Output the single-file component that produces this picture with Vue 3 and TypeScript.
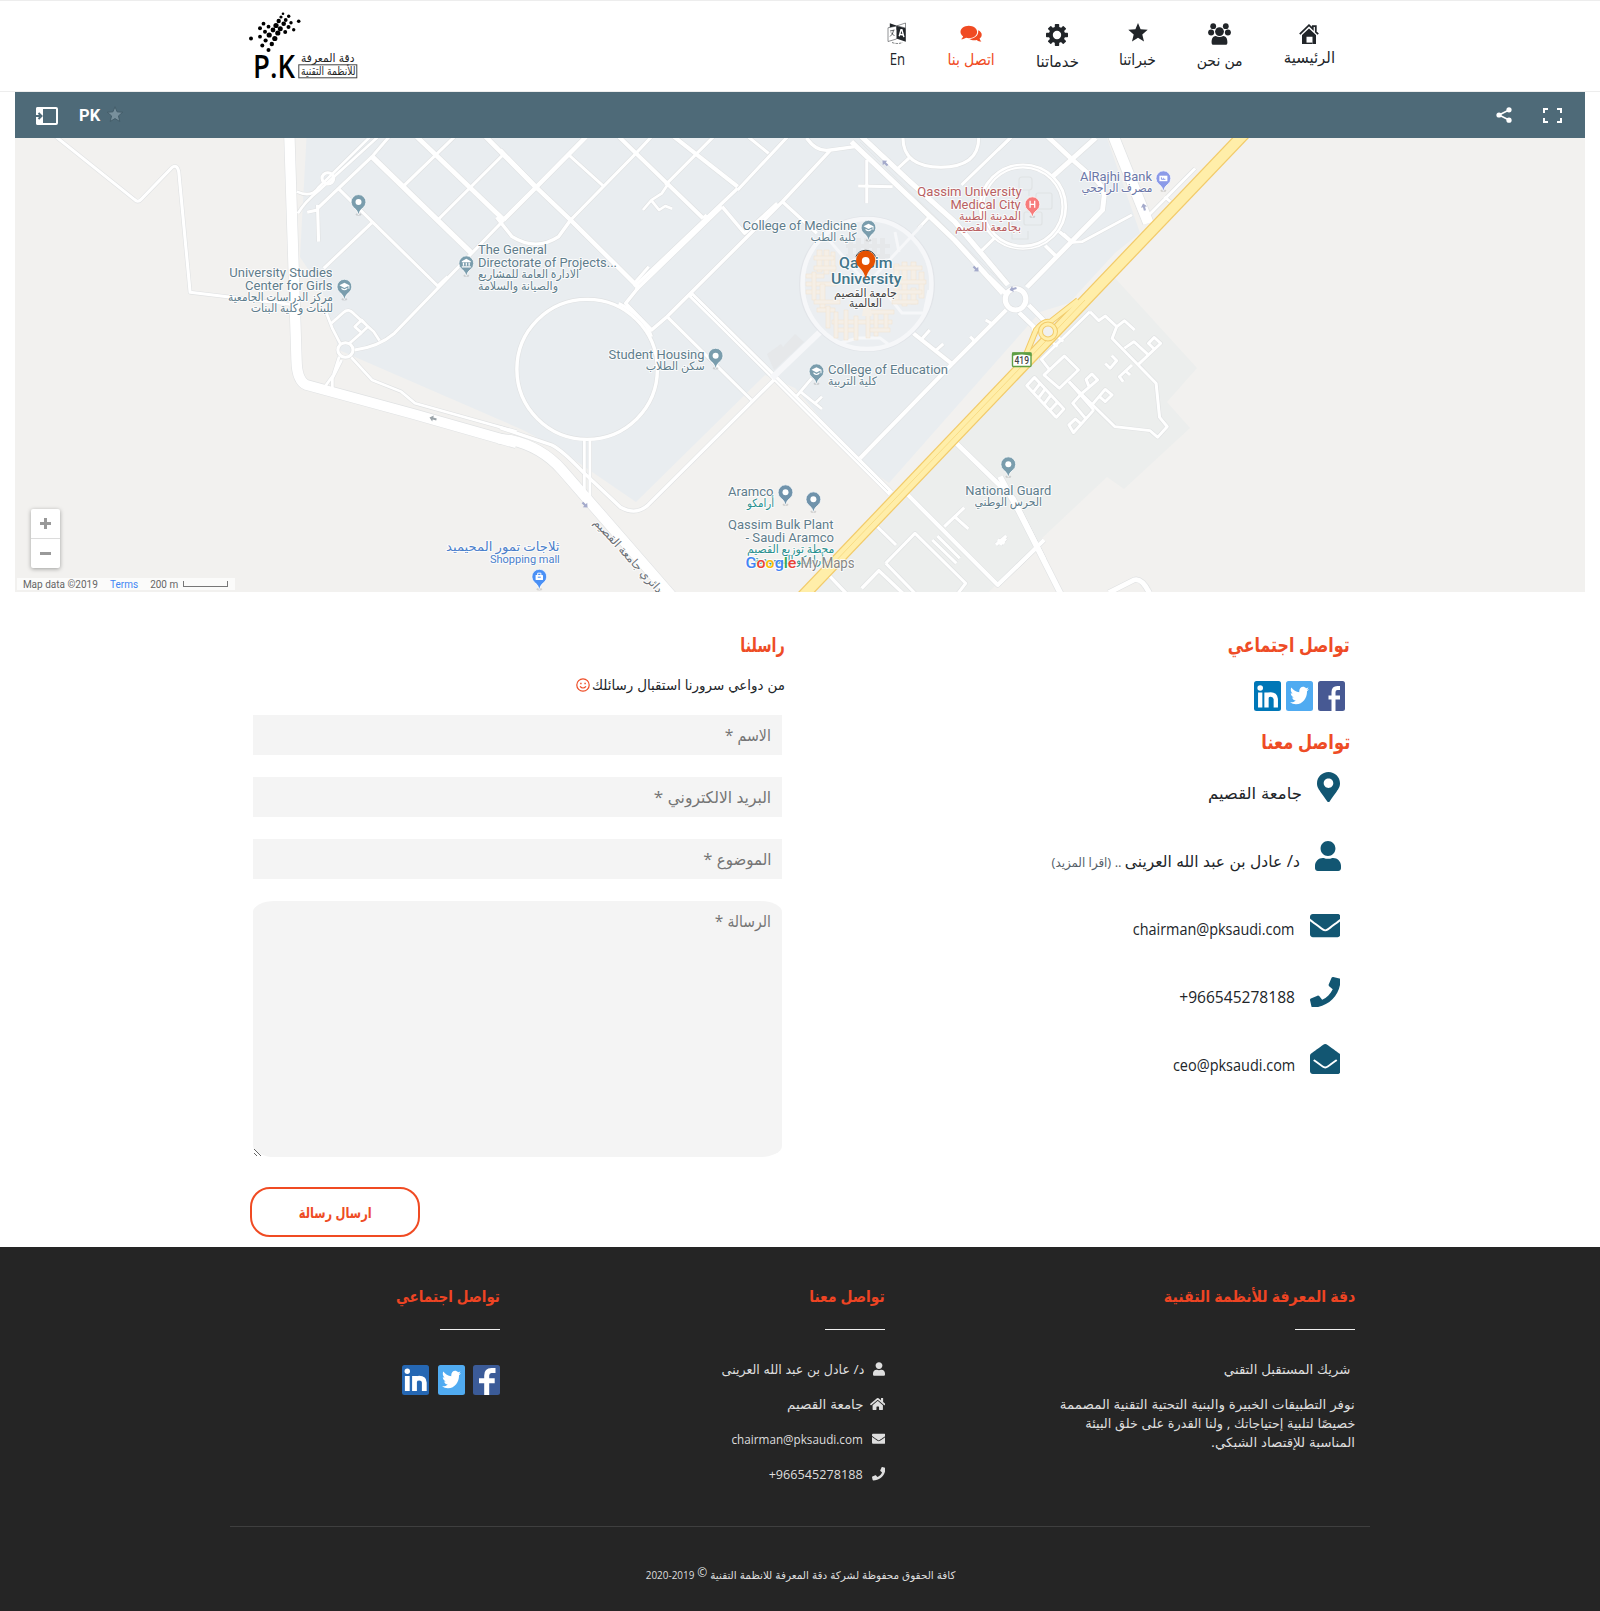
<script setup lang="ts">
type Label = [text: string, x: number, y: number, width: number, size: number, color: string, weight?: number]
type Road = [d: string, width: number]

// Squeezes or widens a line of text to a fixed measure, anchored at its right edge.
const vFit = {
  mounted(el: HTMLElement, { value }: { value: number }) {
    const natural = el.getBoundingClientRect().width
    el.style.transformOrigin = 'right center'
    el.style.transform = `scaleX(${value / natural})`
    el.style.marginLeft = `${value - natural}px`
  },
}

const paths = {
  pin: { w: 384, h: 512, d: 'M172.268 501.67C26.97 291.031 0 269.413 0 192 0 85.961 85.961 0 192 0s192 85.961 192 192c0 77.413-26.97 99.031-172.268 309.67-9.535 13.774-29.93 13.773-39.464 0zM192 272c44.183 0 80-35.817 80-80s-35.817-80-80-80-80 35.817-80 80 35.817 80 80 80z' },
  user: { w: 448, h: 512, d: 'M224 256c70.7 0 128-57.3 128-128S294.7 0 224 0 96 57.3 96 128s57.3 128 128 128zm89.6 32h-16.7c-22.2 10.2-46.9 16-72.9 16s-50.6-5.8-72.9-16h-16.7C60.2 288 0 348.2 0 422.4V464c0 26.5 21.5 48 48 48h352c26.5 0 48-21.5 48-48v-41.6c0-74.2-60.2-134.4-134.4-134.4z' },
  mail: { w: 512, h: 512, d: 'M502.3 190.8c3.9-3.1 9.7-.2 9.7 4.7V400c0 26.5-21.5 48-48 48H48c-26.5 0-48-21.5-48-48V195.6c0-5 5.7-7.8 9.7-4.7 22.4 17.4 52.1 39.5 154.1 113.6 21.1 15.4 56.7 47.8 92.2 47.6 35.7.3 72-32.8 92.3-47.6 102-74.1 131.6-96.3 154-113.7zM256 320c23.2.4 56.6-29.2 73.4-41.4 132.7-96.3 142.8-104.7 173.4-128.7 5.8-4.5 9.2-11.5 9.2-18.9v-19c0-26.5-21.5-48-48-48H48c-26.5 0-48 21.5-48 48v19c0 7.4 3.4 14.3 9.2 18.9 30.6 23.9 40.7 32.4 173.4 128.7 16.8 12.2 50.2 41.8 73.4 41.4z' },
  phone: { w: 512, h: 512, d: 'M493.4 24.6l-104-24c-11.3-2.6-22.9 3.3-27.5 13.9l-48 112c-4.2 9.8-1.4 21.3 6.9 28l60.6 49.6c-36 76.7-98.9 140.5-177.2 177.2l-49.6-60.6c-6.8-8.3-18.2-11.1-28-6.9l-112 48C3.9 366.5-2 378.1.6 389.4l24 104C27.1 504.2 36.7 512 48 512c256.1 0 464-207.5 464-464 0-11.2-7.7-20.9-18.6-23.4z' },
  open: { w: 512, h: 512, d: 'M512 464c0 26.51-21.49 48-48 48H48c-26.51 0-48-21.49-48-48V200.724a48 48 0 0 1 18.387-37.776c24.913-19.529 45.501-35.365 164.2-121.511C199.412 29.17 232.797-.347 256 .003c23.198-.354 56.596 29.172 73.413 41.433 118.687 86.137 139.303 101.995 164.2 121.512A48 48 0 0 1 512 200.724V464zm-65.666-196.605c-2.563-3.728-7.7-4.595-11.339-1.907-22.845 16.873-55.462 40.705-105.582 77.079-16.825 12.266-50.21 41.781-73.413 41.43-23.211.344-56.559-29.143-73.413-41.43-50.114-36.37-82.734-60.204-105.582-77.079-3.639-2.688-8.776-1.821-11.339 1.907l-9.072 13.196a7.998 7.998 0 0 0 1.839 10.967c22.887 16.899 55.454 40.69 105.303 76.868 20.274 14.781 56.524 47.813 92.264 47.573 35.724.242 71.961-32.771 92.263-47.573 49.85-36.179 82.418-59.97 105.303-76.868a7.998 7.998 0 0 0 1.839-10.967l-9.071-13.196z' },
  home: { w: 576, h: 512, d: 'M280.37 148.26L96 300.11V464a16 16 0 0 0 16 16l112.06-.29a16 16 0 0 0 15.92-16V368a16 16 0 0 1 16-16h64a16 16 0 0 1 16 16v95.64a16 16 0 0 0 16 16.05L464 480a16 16 0 0 0 16-16V300L295.67 148.26a12.19 12.19 0 0 0-15.3 0zM571.6 251.47L488 182.56V44.05a12 12 0 0 0-12-12h-56a12 12 0 0 0-12 12v72.61L318.47 43a48 48 0 0 0-61 0L4.34 251.47a12 12 0 0 0-1.6 16.9l25.5 31A12 12 0 0 0 45.15 301l235.22-193.74a12.19 12.19 0 0 1 15.3 0L530.9 301a12 12 0 0 0 16.9-1.6l25.5-31a12 12 0 0 0-1.7-16.93z' },
}
const bird = 'M459.37 151.716c.325 4.548.325 9.097.325 13.645 0 138.72-105.583 298.558-298.558 298.558-59.452 0-114.68-17.219-161.137-47.106 8.447.974 16.568 1.299 25.34 1.299 49.055 0 94.213-16.568 130.274-44.832-46.132-.975-84.792-31.188-98.112-72.772 6.498.974 12.995 1.624 19.818 1.624 9.421 0 18.843-1.3 27.614-3.573-48.081-9.747-84.143-51.98-84.143-102.985v-1.299c13.969 7.797 30.214 12.67 47.431 13.319-28.264-18.843-46.781-51.005-46.781-87.391 0-19.492 5.197-37.36 14.294-52.954 51.655 63.675 129.3 105.258 216.365 109.807-1.624-7.797-2.599-15.918-2.599-24.04 0-57.828 46.782-104.934 104.934-104.934 30.213 0 57.502 12.67 76.67 33.137 23.715-4.548 46.456-13.32 66.599-25.34-7.798 24.366-24.366 44.833-46.132 57.827 21.117-2.273 41.584-8.122 60.426-16.243-14.292 20.791-32.161 39.308-52.628 54.253z'

const nav = [
  { id: 'home', text: 'الرئيسية', w: 51.4, box: 25 },
  { id: 'team', text: 'من نحن', w: 46, box: 28 },
  { id: 'star', text: 'خبراتنا', w: 36.7, box: 26.5 },
  { id: 'gear', text: 'خدماتنا', w: 43, box: 28.5 },
  { id: 'chat', text: 'اتصل بنا', w: 47.4, box: 26.5 },
  { id: 'lang', text: 'En', w: 15.4, box: 26.5 },
]

const logoDots = [
  [283, 13.7, 1.3], [281, 17, 1.6], [288.7, 16.3, 1.7], [298.7, 21.3, 1.8], [278.7, 21, 2.2], [285.7, 20, 1.9], [291, 22.7, 1.7],
  [263.5, 23.7, 1.9], [276, 25.5, 2.6], [283.7, 23.8, 2.3], [268.5, 26.7, 1.9], [260, 28.3, 2], [288.5, 27, 2], [273, 30, 2.4],
  [280.3, 28.7, 2.5], [293.7, 29.7, 1.7], [265, 31.7, 2], [285.2, 32, 2], [277.8, 33, 2.6], [269.2, 35, 2.6], [260, 36.7, 1.9],
  [251, 38.4, 2], [274.8, 38.5, 2.6], [265.6, 40.5, 2.1], [271.8, 44, 2.2], [262.3, 45.5, 2], [268.5, 50, 2],
]

// Road network, one sheet per survey tile. Each sheet carries its own scale.
const tiles: { transform: string; roads: Road[] }[] = [
  {
    transform: 'translate(0 130) scale(.3444 .3333)',
    roads: [
      ['M150 10L390 208Q400 220 410 208L498 114Q514 100 519 125L552 487L860 525', 9],
      ['M862 185Q905 205 925 172L1075 20', 8], ['M865 250Q885 215 925 182L1100 18', 8],
      ['M935 145A17 17 0 1 0 969 145A17 17 0 1 0 935 145', 9],
      ['M892 247L922 240M922 225L925 335M922 235L1080 80L1130 20M985 178L1271 468L1300 440M1080 278L940 415', 9],
      ['M1080 80L1370 370', 16], ['M1170 170L1320 20M1271 270L1460 75', 9],
      ['M1210 20L1463 270', 14], ['M1410 20L1556 172', 14], ['M1463 270L1145 610Q1100 650 1030 660', 9],
      ['M981 660A22 22 0 1 0 1025 660A22 22 0 1 0 981 660', 9],
      ['M962 580L998 547Q1012 533 1028 552L1085 605L1102 632M1050 570L1068 590L1050 608L1030 590ZM1050 608L1015 640', 8],
      ['M948 550L965 595L990 645M985 680L968 735L940 775M992 690L965 745L965 780', 8],
      ['M1020 682L1080 750L1165 785L1205 820L1500 905', 8],
      ['M840 10L861 690Q862 752 890 765L1200 852L1500 940', 30],
    ],
  },
  {
    transform: 'translate(500 130) scale(.3444 .3333)',
    roads: [
      ['M0 60L105 172M105 172L250 20M105 172L10 270M105 172L205 270L400 470', 13],
      ['M-10 262L35 320Q105 365 170 320L205 270', 10],
      ['M200 75L300 168M205 270L390 75L440 20M480 165L620 20M690 180L835 20M720 20L780 70', 9],
      ['M345 20L590 265M505 20L690 170', 12], ['M486 165L470 190L440 210L415 240M440 212L462 240L480 228L500 236', 8],
      ['M690 175L390 470M645 230L395 480M645 230L710 310L805 220M590 265L600 255', 10],
      ['M820 215L485 560L440 600L365 520L400 475M820 215L920 310M960 60L820 215M890 24Q920 68 960 60L1030 50', 10],
      ['M432 410L390 460M485 560L730 810', 9],
      ['M49 718A204 210 0 1 0 457 718A204 210 0 1 0 49 718', 10], ['M345 520Q420 560 440 620', 9],
      ['M795 750L430 1125Q395 1158 350 1132L240 1025Q180 960 150 945L0 893', 10],
      ['M245 925L245 1110M261 925L261 1110', 8],
      ['M550 490L795 740L1135 1090', 18], ['M860 800L905 745M872 785L935 837M935 800L915 820', 8],
      ['M1215 295L1245 262M1390 370L1435 325M1065 90L1065 220M1040 168L1140 170M1480 25L1340 165', 9],
      ['M1020 35L1320 330L1460 490', 15], ['M1050 20L1190 155L1320 275L1475 465', 15],
      ['M1170 24Q1170 110 1280 112Q1390 110 1390 24M1192 80L1150 120', 9],
      ['M1467 508A30 32 0 1 0 1527 508A30 32 0 1 0 1467 508', 15],
      ['M1470 540L1310 705L1045 985', 12], ['M1200 610L1310 700', 12], ['M1222 630L1248 600M1265 662L1287 642M1410 570L1430 582M1365 620L1380 635', 9],
      ['M1315 930L1490 1105L1580 1290', 14], ['M1170 1080L1445 1365L1580 1230', 12],
      ['M1085 1180L1150 1245M1290 1190L1348 1133M1320 1160L1360 1197M1120 1300L1205 1210L1352 1360L1330 1390M1120 1300L1205 1390M1255 1230L1325 1300M1270 1218L1335 1285M1440 1245L1470 1218M1445 1230L1465 1240', 9],
      ['M945 1325L1005 1390M1050 1375L1100 1322L1170 1390', 10],
      ['M-5 926L30 930Q120 950 180 1020L260 1115L500 1400', 30],
    ],
  },
  {
    transform: 'translate(1000 90) scale(.38265 .3333)',
    roads: [
      ['M297 140L388 400', 28], ['M125 140L188 208L240 260Q275 290 272 320L268 360L70 592', 13], ['M250 144L135 262', 14],
      ['M165 430L190 457L215 455L345 375M510 235L385 380M430 320L445 335', 8], ['M118 467L145 497M155 425L188 457', 10],
      ['M-30 560L15 610M75 645L122 700M50 668L88 710L90 745', 12],
      ['M-48 350A108 122 0 1 0 168 350A108 122 0 1 0 -48 350', 15],
      ['M-5 180L32 140', 7],
      ['M235 665L108 808L130 840M135 755L150 770M150 740L165 755', 8],
      ['M115 855L168 798L205 840L155 895ZM180 875L300 1010L392 1022L412 1042L437 1010L417 982L408 880L293 745L305 710M235 665L258 692L275 678L305 710L325 692L352 720', 8],
      ['M325 775L350 755L388 795M360 825L420 760L403 742L388 760L404 778M275 820L288 835L305 812L292 797M345 825L312 860L322 875M330 845L340 855', 8],
      ['M90 862L167 957L147 982L70 887ZM105 880L88 905M118 897L100 925M133 915L115 943M150 937L130 962', 8],
      ['M212 912L190 940L225 987M245 960L192 1028L180 1005L197 987L212 1002M212 912L255 870L240 852L225 868L232 888M180 875L245 960M240 945L275 898L293 915L275 935L258 918', 8],
      ['M95 1375L-5 1485M0 1365L15 1345', 9], ['M285 1508L350 1470Q370 1462 390 1508', 14], ['M0 1160L50 1265L158 1510', 15],
    ],
  },
]

const slate = '#5f7d8c'
const labels: Label[] = [
  ['University Studies', 229.3, 277, 103.3, 13, slate], ['Center for Girls', 245, 290, 87.5, 13, slate],
  ['مركز الدراسات الجامعية', 228, 300.5, 105, 11.5, slate], ['للبنات وكلية البنات', 250.7, 311.8, 82.5, 11.5, slate],
  ['The General', 478, 254, 69, 13, slate], ['Directorate of Projects...', 478, 267, 139, 13, slate],
  ['الادارة العامة للمشاريع', 478, 278, 101, 11.5, slate], ['والصيانة والسلامة', 478, 289.6, 80, 11.5, slate],
  ['College of Medicine', 742.5, 229.7, 114.5, 13, slate], ['كلية الطب', 810.6, 241, 46, 11.5, slate],
  ['Qassim', 839, 267.7, 53.5, 15.5, '#42758a', 500], ['University', 831, 283.7, 70.5, 15.5, '#42758a', 500],
  ['جامعة القصيم', 834, 296.5, 63, 11.5, '#444'], ['العالمية', 849, 307.3, 33, 11.5, '#444'],
  ['Student Housing', 608.5, 358.8, 96, 13, slate], ['سكن الطلاب', 645.7, 370, 59, 11.5, slate],
  ['College of Education', 828, 373.7, 120, 13, slate], ['كلية التربية', 828, 384.8, 49, 11.5, slate],
  ['Aramco', 728, 496, 45.5, 13, slate], ['أرامكو', 747, 507, 27, 11.5, '#27908f'],
  ['Qassim Bulk Plant', 728, 528.8, 105.5, 13, slate], ['- Saudi Aramco', 745.5, 541.8, 88.5, 13, slate],
  ['محطة توزيع القصيم', 747, 553, 87.4, 11.5, '#27908f'], ['أرامكو السعودية', 754, 564, 70, 11.5, '#27908f'],
  ['National Guard', 965.2, 494.7, 86, 13, slate], ['الحرس الوطني', 974.5, 506, 67.5, 11.5, slate],
  ['ثلاجات تمور المحيميد', 446, 551, 113.5, 12.5, '#4b80cb'], ['Shopping mall', 490, 563, 69.8, 11, '#4b80cb'],
  ['AlRajhi Bank', 1080, 180.7, 72, 13, '#6b77a8'], ['مصرف الراجحي', 1081.5, 192, 71, 11.5, '#6b77a8'],
  ['Qassim University', 917.3, 196, 104.3, 13, '#b95f62'], ['Medical City', 950.4, 209, 70.3, 13, '#b95f62'],
  ['المدينة الطبية', 959, 220, 62, 11.5, '#b95f62'], ['بجامعة القصيم', 955, 231, 66, 11.5, '#b95f62'],
]

const markers: [number, number, string, string][] = [
  [358.5, 202, '#7a9dad', 'dot'], [344.4, 286.7, '#7a9dad', 'cap'], [466.3, 263.3, '#7a9dad', 'hall'], [868.5, 227.7, '#7a9dad', 'cap'],
  [715.6, 355.7, '#7a9dad', 'dot'], [816.5, 371.3, '#7a9dad', 'cap'], [785.5, 492.3, '#7093ab', 'dot'], [813.4, 499.3, '#7093ab', 'dot'],
  [1008.3, 464.3, '#7a9dad', 'dot'], [1032.4, 204.3, '#f77c7c', 'h'], [1163.4, 178.3, '#8b9ae8', 'bank'], [539.3, 576.7, '#4a90f5', 'bag'],
]
const pinShape = 'M0 13Q-1 8-4.8 5.6A7.4 7.4 0 1 1 4.8 5.6Q1 8 0 13Z'

// Campus buildings inside the ring road: x, y, width, height of each block.
const blocks = [
  [817, 250, 5, 22], [824, 250, 5, 24], [831, 252, 4, 20], [814, 256, 20, 4], [814, 266, 22, 4], [806, 274, 18, 4], [806, 282, 30, 4], [806, 290, 18, 4],
  [812, 272, 4, 28], [820, 284, 5, 24], [814, 300, 26, 4], [817, 308, 18, 4], [826, 306, 4, 22], [832, 320, 60, 4], [835, 328, 22, 4],
  [834, 312, 4, 26], [844, 310, 4, 30], [854, 316, 4, 24], [866, 310, 4, 28], [874, 312, 4, 24], [884, 312, 4, 18], [870, 328, 20, 4], [868, 310, 26, 4],
  [894, 264, 5, 36], [902, 262, 5, 44], [911, 262, 5, 18], [911, 288, 5, 16], [919, 272, 5, 26], [894, 266, 28, 4], [890, 280, 36, 4], [894, 290, 28, 4], [892, 300, 26, 4],
]

const contacts = [
  { icon: paths.pin, w: 23, h: 30, top: 7, end: 0, text: 'جامعة القصيم', fit: 94 },
  { icon: paths.user, w: 26, h: 30, top: 7.5, end: -1, text: 'د/ عادل بن عبد الله العرينى', fit: 175, more: true },
  { icon: paths.mail, w: 30.5, h: 31, top: 8.5, end: 0, text: 'chairman@pksaudi.com', fit: 161.7 },
  { icon: paths.phone, w: 30.5, h: 30.5, top: 7.5, end: 0, text: '+966545278188', fit: 115.7 },
  { icon: paths.open, w: 30.5, h: 30, top: 7, end: 0, text: 'ceo@pksaudi.com', fit: 122.4 },
]
const fields = [
  { text: 'الاسم *', fit: 46 },
  { text: 'البريد الالكتروني *', fit: 117.4 },
  { text: 'الموضوع *', fit: 68 },
]
const footerContacts = [
  { icon: paths.user, w: 12, h: 14, gap: 9, text: 'د/ عادل بن عبد الله العرينى', fit: 142.7 },
  { icon: paths.home, w: 15.5, h: 14, gap: 5.5, text: 'جامعة القصيم', fit: 76.6 },
  { icon: paths.mail, w: 13.5, h: 13.5, gap: 8.5, text: 'chairman@pksaudi.com', fit: 131.3 },
  { icon: paths.phone, w: 13.5, h: 13.5, gap: 8.5, text: '+966545278188', fit: 94 },
]
const about = [
  { text: 'نوفر التطبيقات الخبيرة والبنية التحتية التقنية المصممة', fit: 295 },
  { text: 'خصيصًا لتلبية إحتياجاتك , ولنا القدرة على خلق البيئة', fit: 270 },
  { text: 'المناسبة للإقتصاد الشبكي.', fit: 144 },
]
const isLatin = (s: string) => /^[+\w]/.test(s) && !/[\u0600-\u06ff]/.test(s)
</script>

<template>
  <div class="page" dir="rtl">
    <header class="top">
      <nav class="menu">
        <a v-for="n in nav" :key="n.id" :class="['item', { active: n.id === 'chat' }]">
          <span class="glyph" :style="{ height: n.box + 'px' }">
            <svg v-if="n.id === 'home'" class="low" width="20" height="21" viewBox="0 0 20 21">
              <path d="M.8 11.2L10 2.2l3.8 3.7V3.2h3v5.7l2.4 2.3" fill="none" stroke="currentColor" stroke-width="1.8" />
              <path d="M10 5.4l7 6.7V21h-3.5v-7.3h-6V21H3v-8.9z" fill="currentColor" />
              <path d="M6.5 20.3h7" stroke="currentColor" stroke-width="1.4" />
            </svg>
            <svg v-else-if="n.id === 'team'" width="23" height="23" viewBox="0 0 23 23" fill="currentColor">
              <circle cx="5.2" cy="4.2" r="2.9" /><circle cx="17.8" cy="4.2" r="2.9" />
              <circle cx="3.1" cy="10.6" r="3" /><circle cx="19.9" cy="10.6" r="3" />
              <circle cx="11.5" cy="9.6" r="4.4" />
              <path d="M3.6 20.5c0-4.6 1.5-6.4 4.2-6.6 2.2 1.5 5.2 1.5 7.4 0 2.7.2 4.2 2 4.2 6.6 0 1.4-.6 2.3-1.9 2.3h-12c-1.3 0-1.9-.9-1.9-2.3z" />
            </svg>
            <svg v-else-if="n.id === 'star'" width="20" height="20" viewBox="0 0 20 20"><path d="M10 1l2.6 6.3 7.1.5-5.4 4.6 1.7 7L10 15.7 4 19.4l1.7-7L.3 7.800l7.1-.5z" fill="currentColor" /></svg>
            <svg v-else-if="n.id === 'gear'" width="22" height="24" viewBox="-11 -13 22 24">
              <rect v-for="a in 8" :key="a" x="-2.2" y="-11" width="4.4" height="6" rx=".7" fill="currentColor" :transform="`rotate(${a * 45})`" />
              <circle r="6.2" fill="none" stroke="currentColor" stroke-width="4" />
            </svg>
            <svg v-else-if="n.id === 'chat'" width="22" height="21" viewBox="0 0 22 21" fill="currentColor">
              <path d="M8.8 3.7c4.7 0 8.3 2.8 8.3 6.3s-3.6 6.2-8.3 6.2c-1 0-1.9-.1-2.7-.4-1.3.9-3 1.5-5 1.5 1-.8 1.7-1.8 2-3C1.5 13.2.5 11.7.5 10c0-3.5 3.6-6.3 8.3-6.3z" />
              <path d="M18.2 8.3c2.2 1 3.5 2.6 3.5 4.4 0 1.6-.8 2.9-2.1 3.9.3 1.2.9 2.2 1.8 3-1.9 0-3.5-.5-4.7-1.5-3 .6-5.6 0-7.400-1.2 5-.1 9.6-3 8.9-8.6z" />
            </svg>
            <svg v-else width="20" height="23" viewBox="0 0 20 23">
              <path d="M2.8 1.2l7.2 2.6v4H2.8z" fill="currentColor" />
              <path d="M10 3.8l8.5-2.8v5L10 3.8M1 5.8L9.500 4v13L1 19.5z" fill="#fff" stroke="currentColor" stroke-width=".5" />
              <path d="M10 4l8.800 2.2v13.5L10 16.8z" fill="currentColor" />
              <path d="M3 9l4.5-1M6.5 8.500Q6 12.5 3 14.5M4 10.5L7.500 14" stroke="currentColor" fill="none" stroke-width=".7" />
              <path d="M12.200 14.2L14 7.800h.9l2 7.300M13 12.200l3.200.8" stroke="#fff" fill="none" stroke-width="1.400" />
              <path d="M5 20.500q5.500 2 10.500 0" stroke="currentColor" fill="none" stroke-width=".6" stroke-dasharray="2.500 1" />
            </svg>
          </span>
          <span v-fit="n.w" class="fit">{{ n.text }}</span>
        </a>
      </nav>
      <svg class="logo" width="110" height="72" viewBox="248 10 110 72" direction="ltr">
        <circle v-for="(d, i) in logoDots" :key="i" :cx="d[0]" :cy="d[1]" :r="d[2]" />
        <text x="253" y="77.7" class="mono" textLength="42" lengthAdjust="spacingAndGlyphs">P.K</text>
        <text x="301" y="62" class="tag" textLength="53.5" lengthAdjust="spacingAndGlyphs">دقة المعرفة</text>
        <rect x="298.8" y="64.8" width="58" height="13" fill="none" stroke="#444" />
        <text x="301" y="74.5" class="tag" textLength="54.5" lengthAdjust="spacingAndGlyphs">للأنظمة التقنية</text>
      </svg>
    </header>

    <section class="map" dir="ltr">
      <div class="bar">
        <svg width="22" height="18" viewBox="0 0 22 18"><rect x="1" y="1" width="20" height="16" rx="1" fill="none" stroke="#fff" stroke-width="2" /><path d="M0 2q0-2 2-2h5v18H2q-2 0-2-2z" fill="#fff" /><path d="M0 9h4M2.500 6l3 3-3 3" stroke="#4e6a78" stroke-width="2" fill="none" /></svg>
        <b class="name">PK</b>
        <svg width="16" height="16" viewBox="0 0 20 20"><path d="M10 1l2.6 6.3 7.1.5-5.4 4.6 1.7 7L10 15.7 4 19.4l1.7-7L.3 7.800l7.1-.5z" fill="#78909c" stroke="#435c69" stroke-width="1.2" /></svg>
        <svg class="share" width="16" height="16" viewBox="0 0 16 16"><path d="M13 3L3 8l10 5" fill="none" stroke="#fff" stroke-width="1.6" /><circle cx="13" cy="2.8" r="2.6" fill="#fff" /><circle cx="3" cy="8" r="2.6" fill="#fff" /><circle cx="13" cy="13.2" r="2.6" fill="#fff" /></svg>
        <svg width="19" height="15" viewBox="0 0 19 15"><path d="M1 5V1h4M14 1h4v4M18 10v4h-4M5 14H1v-4" fill="none" stroke="#fff" stroke-width="2" /></svg>
      </div>
      <svg class="canvas" width="1570" height="454" viewBox="15 138 1570 454">
        <path d="M306.5 138L300 257L322 290L339 350L355 357L523 430L560 450L636 502L765 375L795 388L858 462L889 483L1040 312L1069 303L1115 253L1140 233L1107 138Z" fill="#e9edf0" />
        <path d="M1115 278L1197 368L1167 402L1190 428L1124 489L1107 477L1040 540L989 592H808Z" fill="#eceeed" />
        <path d="M767 354l14-10 2 3 12-13 9 8-30 28z" fill="#e6e8ea" />
        <g fill="none" stroke-linejoin="round">
          <g v-for="(t, i) in tiles" :key="'c' + i" :transform="t.transform" stroke="#e0e2e3">
            <path v-for="(r, j) in t.roads" :key="j" :d="r[0]" :stroke-width="r[1] + 3.5" />
          </g>
          <g v-for="(t, i) in tiles" :key="'r' + i" :transform="t.transform" stroke="#fff">
            <path v-for="(r, j) in t.roads" :key="j" :d="r[0]" :stroke-width="r[1]" />
          </g>
          <path d="M982 207a41 41 0 1 1 82 0a41 41 0 1 1-82 0" stroke="#e4e6e7" stroke-width=".8" />
          <path d="M692 296L888 491M860 142L1005 286" stroke="#e3e5e7" stroke-width=".9" />
          <g stroke="#e0e3e4" stroke-width="1.2"><rect x="1019" y="177" width="13" height="13" rx="3" /><rect x="1036" y="193" width="16" height="16" rx="2" /><rect x="1024" y="212" width="18" height="13" rx="2" /><path d="M1012 222v17h16v-8M1018 190v12M1029 190v6" /></g>
          <path d="M772 378L820 332" stroke="#f6f7f9" stroke-width="6" />
          <ellipse cx="867" cy="284" rx="67" ry="67" fill="#ebeef1" stroke="#e2e5e9" stroke-width="2" />
          <ellipse cx="867" cy="284" rx="64.5" ry="65" stroke="#f6f7f9" stroke-width="4.5" />
          <path d="M822 232L867 284L922 225M895 232L899 252M885 292L902 313H924L929 290M840 343L858 338H880L888 344" stroke="#f6f7f9" stroke-width="3" />
        </g>
        <g fill="#f5efe7" stroke="#f1e2cf" stroke-width=".5"><rect v-for="(b, i) in blocks" :key="i" :x="b[0]" :y="b[1]" :width="b[2]" :height="b[3]" /></g>
        <g fill="#e6e8ea"><rect v-for="k in 5" :key="k" :x="840 + k * 8" y="238" width="5" height="24" /><rect x="846" y="244" width="44" height="4" /><rect x="846" y="254" width="44" height="4" /></g>
        <path d="M867 286L862 316H872Z" fill="#f5efe7" />

        <g fill="none">
          <path d="M800 599L1247 131" stroke="#f2cb6a" stroke-width="12.5" />
          <path d="M1023 362L1036 330Q1044 320 1050 322L1078 300" stroke="#f2cb6a" stroke-width="6" />
          <path d="M1023 362L1036 330Q1044 320 1050 322L1078 300" stroke="#ffeea9" stroke-width="4" />
          <path d="M800 599L1247 131" stroke="#ffeea9" stroke-width="10" />
          <path d="M830 567L1085 300" stroke="#f6d77c" stroke-width=".8" />
          <ellipse cx="1048" cy="331.5" rx="7.5" ry="7.5" stroke="#f2cb6a" stroke-width="5" fill="#f0f0ef" />
          <ellipse cx="1048" cy="331.5" rx="7.5" ry="7.5" stroke="#ffeea9" stroke-width="3" />
        </g>
        <g fill="#a4aacb">
          <path v-for="(a, i) in [[885, 163, 225], [976, 269, 45], [1013, 289, 165], [1144, 207, 255], [585, 505, 45]]" :key="i" d="M4 0L0-3.500V-1.200H-4V1.200H0V3.500Z" :transform="`translate(${a[0]} ${a[1]}) rotate(${a[2]}) scale(.9)`" />
          <path d="M4 0L0-3.500V-1.200H-4V1.200H0V3.500Z" transform="translate(433 418.5) rotate(195) scale(.9)" fill="#9aa3a8" />
        </g>

        <g v-for="(m, i) in markers" :key="'m' + i" :transform="`translate(${m[0]} ${m[1]})`">
          <ellipse cy="12.5" rx="3" ry="1.2" fill="#0002" />
          <path :d="pinShape" :fill="m[2]" stroke="#fff" stroke-width=".7" />
          <circle v-if="m[3] === 'dot'" r="3" fill="#fff" />
          <path v-else-if="m[3] === 'cap'" d="M-5-1.500L0-4L5-1.500V2H4V-.8L0 1.300ZM-3 1L0 2.600L3 1V2.400Q0 4.800-3 2.400Z" fill="#fff" />
          <path v-else-if="m[3] === 'hall'" d="M0-4.500L4.500-2V-1H-4.500V-2ZM-3.500-.5h1.300v3h-1.300zM-.6-.5H.6v3H-.6zM2.200-.5h1.300v3H2.200zM-4.500 3h9v1.200h-9z" fill="#fff" />
          <path v-else-if="m[3] === 'h'" d="M-2.300-3.500V3.500M2.300-3.500V3.500M-2.300 0H2.300" stroke="#fff" stroke-width="1.3" />
          <g v-else-if="m[3] === 'bank'"><rect x="-4" y="-2.6" width="8" height="5.500" fill="#fff" /><path d="M-2-1v2h4M0-.5v1" stroke="#8b9ae8" fill="none" /></g>
          <g v-else><rect x="-3.7" y="-1.7" width="7.4" height="5" rx=".6" fill="#fff" /><path d="M-1.600-1.500V-3.500H1.600V-1.500" stroke="#fff" fill="none" /><path d="M-1.500 .5H1.500" stroke="#4a90f5" /></g>
        </g>
        <g><rect x="1012.5" y="353" width="18.5" height="13.5" rx="1" fill="#fff" stroke="#5f9e44" stroke-width="1.4" /><path d="M1012 352.500h19.500v3.500q-5-1.500-9.700-1.500t-9.800 1.500z" fill="#5f9e44" /><text class="lbl" x="1014.5" y="363.7" font-size="10" fill="#444" font-weight="500" textLength="14.5" lengthAdjust="spacingAndGlyphs">419</text></g>
        <text v-for="(l, i) in labels" :key="'l' + i" class="lbl" :x="l[1]" :y="l[2]" :font-size="l[4]" :fill="l[5]" :font-weight="l[6] ?? 400" :textLength="l[3]" lengthAdjust="spacingAndGlyphs">{{ l[0] }}</text>
        <text class="lbl" transform="translate(593 523) rotate(47.5)" font-size="11.5" fill="#6a6f75" textLength="96" lengthAdjust="spacingAndGlyphs">دائري جامعة القصيم</text>
        <text class="lbl" x="745.5" y="568" font-size="15.5" font-weight="500" textLength="51" lengthAdjust="spacingAndGlyphs"><tspan fill="#4285f4">G</tspan><tspan fill="#ea4335">o</tspan><tspan fill="#fbbc05">o</tspan><tspan fill="#4285f4">g</tspan><tspan fill="#34a853">l</tspan><tspan fill="#ea4335">e</tspan></text>
        <text class="lbl" x="800.6" y="568" font-size="14" fill="#868686" textLength="54" lengthAdjust="spacingAndGlyphs">My Maps</text>
        <g>
          <path d="M865.7 279.5Q864.5 272 859.5 267.500A9.600 9.600 0 1 1 871.9 267.500Q867 272 865.7 279.5Z" fill="#e65100" />
          <path d="M855.900 256.500a10.800 10.800 0 0 1 19.600 0" fill="none" stroke="#333" stroke-width=".9" />
          <circle cx="865.7" cy="261" r="3.9" fill="#fff" />
        </g>
      </svg>
      <div class="zoom"><i class="plus"></i><i class="minus"></i></div>
      <div class="credit"><span v-fit="75" class="fit">Map data ©2019</span><a v-fit="28" class="fit">Terms</a><span v-fit="28" class="fit">200 m</span><i></i></div>
    </section>

    <main class="contact">
      <section class="info">
        <h3><span v-fit="122" class="fit">تواصل اجتماعي</span></h3>
        <div class="social">
          <svg width="27" height="30" viewBox="0 0 27 30"><rect width="27" height="30" rx="2.5" fill="#475993" /><path d="M15.500 30V11q0-4 4-4h2.500M10.500 16.500H22" fill="none" stroke="#fff" stroke-width="4" /></svg>
          <svg width="27" height="30" viewBox="0 0 27 30"><rect width="27" height="30" rx="2.5" fill="#50abf1" /><path :d="bird" fill="#fff" transform="translate(4 3.8) scale(.037 .042)" /></svg>
          <svg width="27" height="30" viewBox="0 0 27 30"><rect width="27" height="30" rx="2.5" fill="#0077b7" /><circle cx="6.2" cy="7" r="2.8" fill="#fff" /><path d="M6.200 11.500V26.500M12.500 26.500V11.500M12.500 26.500V17q0-3.500 4.300-3.500T21.800 18v8.500" fill="none" stroke="#fff" stroke-width="4.3" /></svg>
        </div>
        <h3 class="second"><span v-fit="89" class="fit">تواصل معنا</span></h3>
        <ul class="rows">
          <li v-for="c in contacts" :key="c.text">
            <svg :width="c.w" :height="c.h" :viewBox="`0 0 ${c.icon.w} ${c.icon.h}`" preserveAspectRatio="none" :style="{ marginTop: c.top + 'px', marginRight: c.end + 'px' }"><path :d="c.icon.d" fill="#125672" /></svg>
            <p><span v-fit="c.fit" :class="['fit', { latin: isLatin(c.text) }]" :dir="isLatin(c.text) ? 'ltr' : 'rtl'">{{ c.text }}</span><a v-if="c.more" v-fit="70" class="fit more">.. (اقرا المزيد)</a></p>
          </li>
        </ul>
      </section>

      <form class="letter" @submit.prevent>
        <h3><span v-fit="44.4" class="fit">راسلنا</span></h3>
        <p class="lead">
          <span v-fit="193" class="fit">من دواعي سرورنا استقبال رسائلك</span>
          <svg width="14" height="14" viewBox="0 0 14 14" fill="none" stroke="#ee4c26" stroke-width="1.2"><circle cx="7" cy="7" r="6.2" /><path d="M4 8.300q3 3.400 6 0" /><path d="M4.200 5.400h1.400M8.400 5.400h1.400" stroke-width="1.5" /></svg>
        </p>
        <label v-for="f in fields" :key="f.text" class="field"><input type="text" /><span v-fit="f.fit" class="fit hint">{{ f.text }}</span></label>
        <label class="field area"><textarea></textarea><span v-fit="56" class="fit hint">الرسالة *</span></label>
        <button type="submit"><span v-fit="73" class="fit">ارسال رسالة</span></button>
      </form>
    </main>

    <footer>
      <div class="cols">
        <section class="c1">
          <h4><span v-fit="191.6" class="fit">دقة المعرفة للأنظمة التقنية</span></h4>
          <p class="motto"><span v-fit="126.7" class="fit">شريك المستقبل التقني</span></p>
          <p v-for="a in about" :key="a.fit" class="line"><span v-fit="a.fit" class="fit">{{ a.text }}</span></p>
        </section>
        <section class="c2">
          <h4><span v-fit="75.3" class="fit">تواصل معنا</span></h4>
          <p v-for="c in footerContacts" :key="c.text" class="entry" :style="{ gap: c.gap + 'px' }">
            <svg :width="c.w" :height="c.h" :viewBox="`0 0 ${c.icon.w} ${c.icon.h}`"><path :d="c.icon.d" fill="#dedede" /></svg>
            <span v-fit="c.fit" class="fit" :dir="isLatin(c.text) ? 'ltr' : 'rtl'">{{ c.text }}</span>
          </p>
        </section>
        <section class="c3">
          <h4><span v-fit="104" class="fit">تواصل اجتماعي</span></h4>
          <div class="social">
            <svg width="27" height="30" viewBox="0 0 27 30"><rect width="27" height="30" rx="2.5" fill="#3b5b98" /><path d="M13.700 30V10.500q0-5 4.800-5h4M6 15.700h15.700" fill="none" stroke="#fff" stroke-width="5" /></svg>
            <svg width="27" height="30" viewBox="0 0 27 30"><rect width="27" height="30" rx="2.5" fill="#50abf1" /><path :d="bird" fill="#fff" transform="translate(4 3.8) scale(.037 .042)" /></svg>
            <svg width="27" height="30" viewBox="0 0 27 30"><rect width="27" height="30" rx="2.5" fill="#2567b3" /><circle cx="5.3" cy="6.3" r="2.7" fill="#fff" /><path d="M5.300 11V26M12.500 26V11M12.500 26V17q0-3.800 4.800-3.800T22.300 17.500V26" fill="none" stroke="#fff" stroke-width="4.8" /></svg>
          </div>
        </section>
      </div>
      <p class="rights"><span v-fit="245.3" class="fit">كافة الحقوق محفوظة لشركة دقة المعرفة للانظمة التقنية</span><span class="copy">©</span><span v-fit="48.7" class="fit" dir="ltr">2020-2019</span></p>
    </footer>
  </div>
</template>

<style>
body { margin: 0; background: #fff; }
</style>

<style scoped>
.page { width: 1600px; height: 1611px; overflow: hidden; display: flex; flex-direction: column; font-family: 'Open Sans', 'DejaVu Sans Condensed', 'DejaVu Sans', sans-serif; color: #212529; background: #fff; }
.page * { box-sizing: border-box; }
svg { display: block; flex: none; }
h3, h4, p, ul { margin: 0; padding: 0; list-style: none; }
.fit { display: inline-block; white-space: nowrap; }
.latin { font-weight: 400; }

.top { flex: none; height: 92px; border-top: 1px solid #ededed; border-bottom: 1px solid #ededed; display: flex; justify-content: space-between; padding: 0 265px 0 248px; }
.menu { display: flex; gap: 40.7px; padding-top: 21px; }
.item { display: flex; flex-direction: column; align-items: center; font-size: 15.5px; line-height: 20px; }
.glyph { display: block; }
.low { margin-top: 1px; }
.active { color: #f04b23; }
.logo { margin-top: 9px; overflow: visible; }
.mono { font: 600 33px 'Open Sans', sans-serif; }
.tag { font: 11.5px 'DejaVu Sans Condensed', 'DejaVu Sans', sans-serif; fill: #222; }

.map { flex: none; position: relative; width: 1570px; margin: 0 15px; height: 500px; background: #f2f1ef; font-family: Roboto, 'DejaVu Sans Condensed', sans-serif; overflow: hidden; }
.bar { height: 46px; background: #4e6a78; display: flex; align-items: center; padding: 0 23px 0 21px; }
.bar svg:first-child { margin-top: 2px; }
.bar svg:nth-child(3) { margin-bottom: 2px; }
.name { color: #fff; font-size: 16.5px; margin: 0 7px 0 21px; width: 21px; }
.share { margin-left: auto; margin-right: 31px; }
.lbl { font-family: Roboto, 'DejaVu Sans', sans-serif; paint-order: stroke; stroke: #fff; stroke-width: 2px; stroke-linejoin: round; stroke-opacity: .8; }
.zoom { position: absolute; left: 16px; top: 417px; width: 29px; height: 59px; background: #fff; border-radius: 2px; box-shadow: 0 1px 4px rgba(0, 0, 0, .35); display: flex; flex-direction: column; }
.zoom i { flex: 1; display: grid; place-items: center; }
.zoom i + i { border-top: 1px solid #dcdcdc; }
.zoom i::before, .plus::after { content: ''; grid-area: 1 / 1; width: 11px; height: 3px; background: #999; }
.plus::after { transform: rotate(90deg); }
.credit { position: absolute; left: 2px; bottom: 2px; width: 218px; height: 12px; background: rgba(255, 255, 255, .7); font-size: 10px; line-height: 13px; color: #666; display: flex; align-items: center; padding-left: 6px; }
.credit a { color: #4285f4; }
.credit .fit:nth-child(2) { translate: 12px 0; }
.credit .fit:nth-child(3) { translate: 24px 0; }
.credit i { width: 45px; height: 6px; border: 1px solid #777; border-top: 0; margin-left: 29px; }

.contact { flex: none; height: 655px; display: flex; justify-content: space-between; padding: 0 250px; }
h3 { font-size: 20px; line-height: 30px; font-weight: 700; color: #ee4c26; }
.info { padding-top: 37.5px; }
.social { display: flex; gap: 5px; }
.info .social { margin: 21.5px 5px 0 0; }
.second { margin-top: 16px; }
.rows { margin-top: 8px; padding-right: 10px; }
.rows li { height: 68px; display: flex; align-items: flex-start; gap: 14.7px; }
.rows p { font-size: 16px; line-height: 24px; padding-top: 15.5px; }
.more { font-size: 12.5px; color: #56606a; margin-right: 4px; }

.letter { width: 535px; padding-top: 37.5px; }
.lead { display: flex; align-items: center; gap: 2px; font-size: 14px; line-height: 20px; margin-top: 15.5px; }
.field { position: relative; display: block; width: 529px; height: 40px; margin: 0 3px 22px 3px; }
.lead + .field { margin-top: 20px; }
.field input, .field textarea { display: block; width: 100%; height: 100%; margin: 0; border: 0; background: #f4f4f4; outline: 0; }
.field.area { height: 256px; margin-bottom: 30px; }
.field textarea { border-radius: 22px / 11px; resize: both; }
.hint { position: absolute; right: 11px; top: 8px; font-size: 16px; line-height: 24px; color: #757575; }
button { display: block; margin-right: auto; width: 170px; height: 50px; border: 2px solid #f04b23; border-radius: 20px; background: #fff; color: #ee4c26; font: 700 15px/20px 'Open Sans', 'DejaVu Sans Condensed', sans-serif; padding: 0; }

footer { flex: 1; background: #252525; color: #dedede; font-size: 13px; line-height: 20px; }
.cols { width: 1140px; height: 280px; margin: 0 auto; border-bottom: 1px solid #3f3f3f; display: flex; padding-top: 38px; }
.c1 { width: 470px; padding-right: 15px; }
.c2 { width: 385px; padding-right: 15px; }
.c3 { padding-right: 15px; }
h4 { font-size: 16px; line-height: 22px; font-weight: 700; color: #ee4423; height: 45px; }
h4::after { content: ''; display: block; width: 60px; height: 1px; background: #eee; margin-top: 21.5px; }
.motto { padding-right: 5px; margin: 29px 0 16px; }
.line { height: 19px; line-height: 19px; }
.entry { display: flex; align-items: center; height: 20px; margin-bottom: 15px; }
h4 + .entry { margin-top: 29px; }
.c3 .social { gap: 8.5px; margin-top: 35px; }
.rights { display: flex; justify-content: center; align-items: center; font-size: 10.5px; margin-top: 38px; padding-left: 1px; }
.copy { font-size: 12px; margin: -4px 3px 0 4px; width: 9px; }
</style>
